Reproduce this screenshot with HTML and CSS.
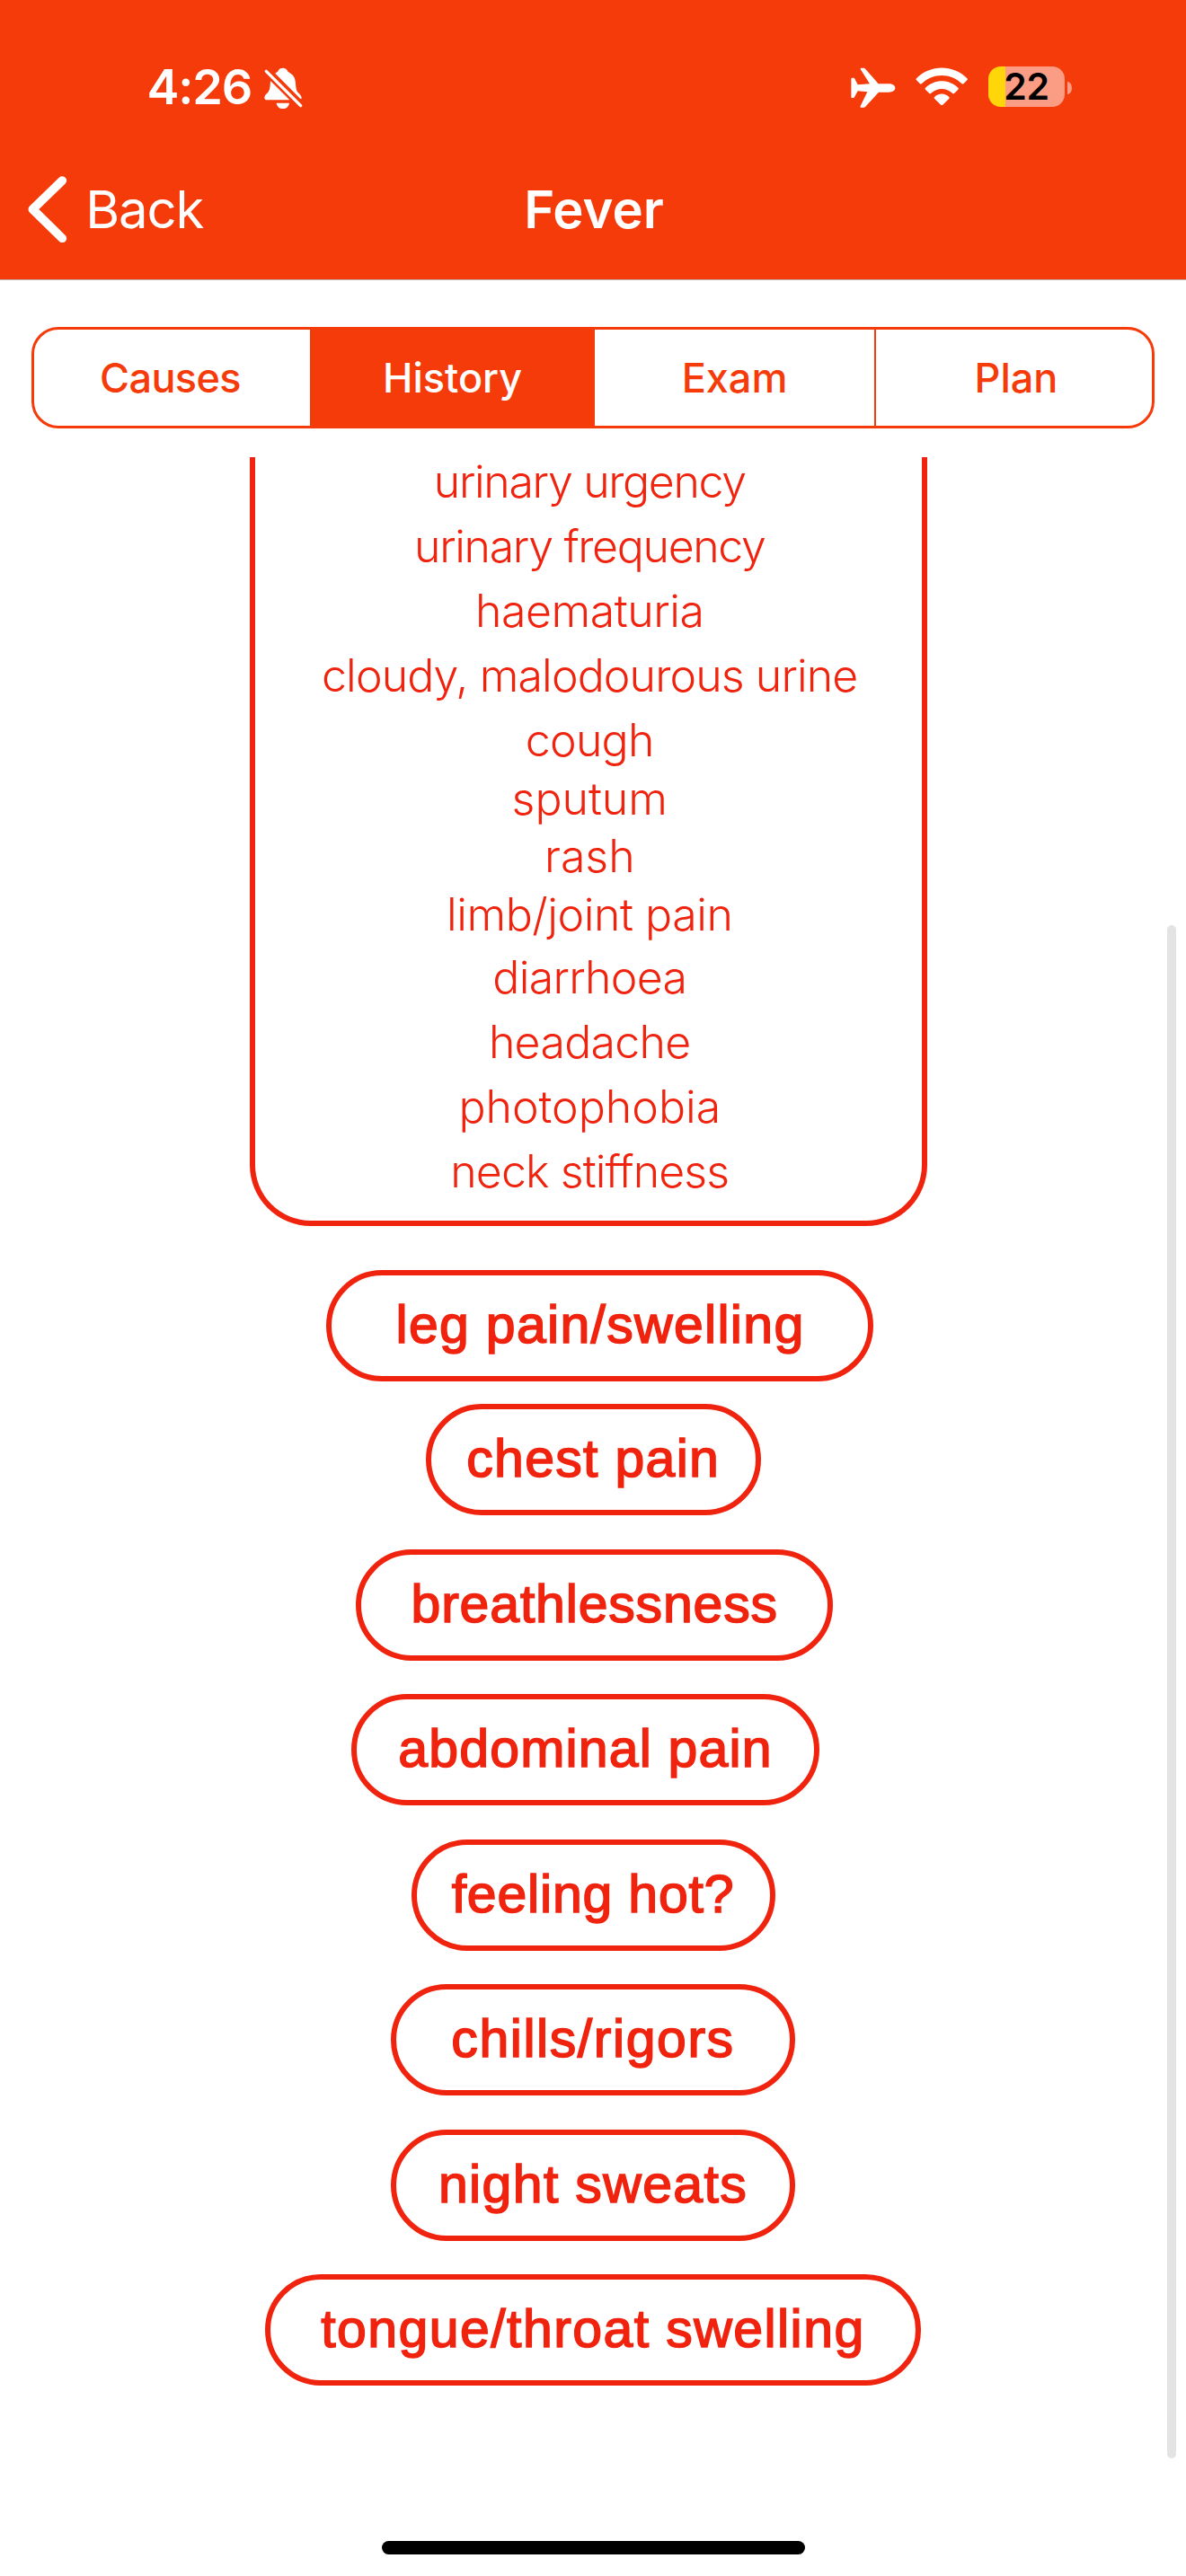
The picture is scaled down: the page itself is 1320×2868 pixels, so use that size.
FILE: index.html
```html
<!DOCTYPE html>
<html lang="en">
<head>
<meta charset="utf-8">
<title>Fever</title>
<link rel="stylesheet" href="styles.css">
</head>
<body>
<header class="header">
  <div class="status">
    <span class="time">4:26</span>
    <svg class="bell" viewBox="880 104 130 140" fill="#fff">
      <path d="M917 124C922 120 927 118 928 114C931 104 953 104 957 114C958 119 963 121 968 124C980 131 984 143 985 156C986 172 987 182 993 188C1000 195 1005 199 1005 206C1005 209 1003 210 1001 209Z"/>
      <path d="M901 149L965 213H890C884 213 881 210 881 205C881 198 887 193 893 187C900 179 900 165 901 149Z"/>
      <path d="M921 223H964C962 235 954 242 942.500 242S923 235 921 223Z"/>
      <path d="M887 117L1002 232" stroke="#fff" stroke-width="10" stroke-linecap="round"/>
    </svg>
    <svg class="plane" viewBox="140 106 150 136" fill="#fff">
      <path d="M172 112C171 109 173 108 176 108H183C186 108 187 110 189 112L232 161H267C279 161 288 167 288 175S279 189 267 189H233L190 236C188 239 186 240 183 240H174C171 240 171 238 172 235L195 188L163 185L152 205C151 207 150 208 147 208H144C142 208 141 207 141 205V144C141 142 142 141 144 141H148C151 141 152 142 153 144L163 164L203 161Z"/>
    </svg>
    <svg class="wifi" viewBox="358 104 176 128" fill="#fff">
      <path d="M361 141C407 94 484 94 530 141Q533 144 530 147L518 159Q515 161 512 158C475 122 416 122 379 158Q376 161 373 159L361 147Q358 144 361 141Z"/>
      <path d="M391 172C421 142 470 142 500 172Q503 175 500 178L487 191Q484 193 481 190C461 171 430 171 410 190Q407 193 404 191L391 178Q388 175 391 172Z"/>
      <path d="M421 203C434 189 457 189 470 203Q472 206 470 208L448 230Q445.500 232 443 230L421 208Q419 206 421 203Z"/>
    </svg>
    <div class="battery"><span class="level">22</span></div>
    <i class="nub"></i>
  </div>
  <nav class="nav">
    <a class="back">
      <svg class="chevron" viewBox="92 470 132 224"><path d="M207 485L108 581L207 678" fill="none" stroke="#fff" stroke-width="29" stroke-linecap="round" stroke-linejoin="round"/></svg>
      <span>Back</span>
    </a>
    <h1 class="title">Fever</h1>
  </nav>
</header>
<div class="tabs">
  <button class="tab causes">Causes</button>
  <button class="tab active">History</button>
  <button class="tab exam">Exam</button>
  <button class="tab plan">Plan</button>
</div>
<main class="scroll">
  <section class="panel">
    <ul class="list">
      <li class="tighter top">urinary urgency</li>
      <li class="tighter">urinary frequency</li>
      <li class="loose">haematuria</li>
      <li class="tight">cloudy, malodourous urine</li>
      <li>cough</li>
      <li class="compact first wide">sputum</li>
      <li class="compact wide">rash</li>
      <li class="compact last loose">limb/joint pain</li>
      <li>diarrhoea</li>
      <li>headache</li>
      <li class="wide">photophobia</li>
      <li class="tight">neck stiffness</li>
    </ul>
  </section>
  <div class="pills">
    <button class="pill leg">leg pain/swelling</button>
    <button class="pill chest">chest pain</button>
    <button class="pill breath">breathlessness</button>
    <button class="pill abdominal">abdominal pain</button>
    <button class="pill hot">feeling hot?</button>
    <button class="pill chills">chills/rigors</button>
    <button class="pill night">night sweats</button>
    <button class="pill tongue">tongue/throat swelling</button>
  </div>
  <div class="scrollbar"></div>
</main>
<div class="home"></div>
</body>
</html>
```
FILE: styles.css
```css
* { box-sizing: border-box; }
body {
  margin: 0;
  width: 1320px;
  height: 2868px;
  display: flex;
  flex-direction: column;
  overflow: hidden;
  background: #fff;
  font-family: Inter, "Liberation Sans", sans-serif;
}
button { font: inherit; background: none; margin: 0; padding: 0; border: 0; }

.header {
  height: 312px;
  flex: none;
  background: #f63b0b;
  border-bottom: 1px solid #b9b3b3;
  color: #fff;
}
.status { height: 194px; display: flex; align-items: center; padding-left: 163.5px; }
.time { width: 130px; font-size: 54px; line-height: 54px; font-weight: 600; letter-spacing: -1.2px; }
.bell { width: 43.3px; height: 46.7px; margin-top: 2px; }
.plane { width: 50px; height: 45.3px; margin: 2px 0 0 610px; }
.wifi { width: 58.7px; height: 42.7px; margin: -2px 0 0 22.6px; }
.battery {
  width: 85px;
  height: 45.3px;
  margin: -1px 0 0 22px;
  border-radius: 14px;
  background: linear-gradient(90deg, #ffd60a 19px, #fb9d85 19px);
  display: flex;
  align-items: center;
  justify-content: center;
}
.level { color: #000; font-size: 41px; line-height: 41px; font-weight: 600; letter-spacing: -.3px; }
.nub { width: 5px; height: 14px; margin-left: 3px; margin-top: 1px; border-radius: 0 5px 5px 0 / 0 7px 7px 0; background: #fb9d85; }

.nav { height: 78px; display: grid; grid-template-columns: 1fr auto 1fr; align-items: center; padding-left: 2px; }
.back { display: flex; align-items: center; padding-left: 28.7px; font-size: 58px; line-height: 58px; letter-spacing: -1.1px; }
.chevron { width: 44px; height: 74.7px; margin-right: 20.5px; }
.title { grid-column: 2; margin: 0; font-size: 58px; line-height: 58px; font-weight: 600; }

.tabs {
  width: 1250px;
  height: 113px;
  flex: none;
  margin: 52px 0 0 35px;
  border: 3px solid #f63b0b;
  border-radius: 30px;
  display: grid;
  grid-template-columns: 307px 317px 313px 1fr;
  overflow: hidden;
}
.tab { font-size: 45px; line-height: 45px; font-weight: 450; color: #f63b0b; }
.causes { letter-spacing: -.6px; padding-right: 4px; }
.active { background: #f63b0b; color: #fff; }
.exam { border-right: 2px solid #f63b0b; }
.plan { padding-left: 5px; }

.scroll {
  position: relative;
  height: 2280px;
  flex: none;
  margin-top: 32px;
  color: #f0230e;
}
.panel {
  width: 753.500px;
  height: 855.700px;
  margin-left: 278px;
  border: 6px solid #f0230e;
  border-top: 0;
  border-radius: 0 0 68px 68px;
}
.list {
  margin: 0;
  padding: 0 0 0 3px;
  list-style: none;
  text-align: center;
  font-size: 50px;
  font-weight: 300;
  line-height: 72px;
  letter-spacing: -.7px;
}
.top { line-height: 54px; margin-bottom: 9px; }
.tighter { letter-spacing: -1.34px; }
.tight { letter-spacing: -.88px; }
.loose { letter-spacing: -.45px; }
.wide { letter-spacing: 0; }
.compact { line-height: 64.500px; }
.first { margin-top: -3.500px; }
.last { margin-bottom: 2.400px; }

.pills { display: flex; flex-direction: column; padding-top: 49px; gap: 37.500px; }
.pill {
  height: 124px;
  flex: none;
  padding-bottom: 2px;
  border: 6px solid #f0230e;
  border-radius: 62px;
  color: #f0230e;
  font-family: "Liberation Sans", Arial, sans-serif;
  font-size: 59px;
  line-height: 64px;
  letter-spacing: 1.300px;
  white-space: nowrap;
  -webkit-text-stroke: 1.600px #f0230e;
}
.leg { width: 609px; margin-left: 362.500px; padding-left: 2px; }
.chest { width: 372.500px; margin: -12px 0 0 474px; }
.breath { width: 531px; margin-left: 395.700px; letter-spacing: .820px; padding-left: 1px; }
.abdominal { width: 521px; margin-left: 391px; letter-spacing: 1.160px; }
.hot { width: 405px; margin-left: 457.500px; letter-spacing: .800px; }
.chills { width: 450px; margin-left: 435px; letter-spacing: 1.560px; }
.night { width: 450px; margin-left: 435px; letter-spacing: 1.340px; }
.tongue { width: 730.500px; margin-left: 294.700px; letter-spacing: 1.430px; }

.scrollbar {
  position: absolute;
  left: 1299px;
  top: 521px;
  width: 10px;
  height: 1707px;
  border-radius: 5px;
  background: #e3e3e3;
}
.home { width: 471px; height: 15px; flex: none; margin: 40px 0 0 425px; border-radius: 8px; background: #000; }
```
